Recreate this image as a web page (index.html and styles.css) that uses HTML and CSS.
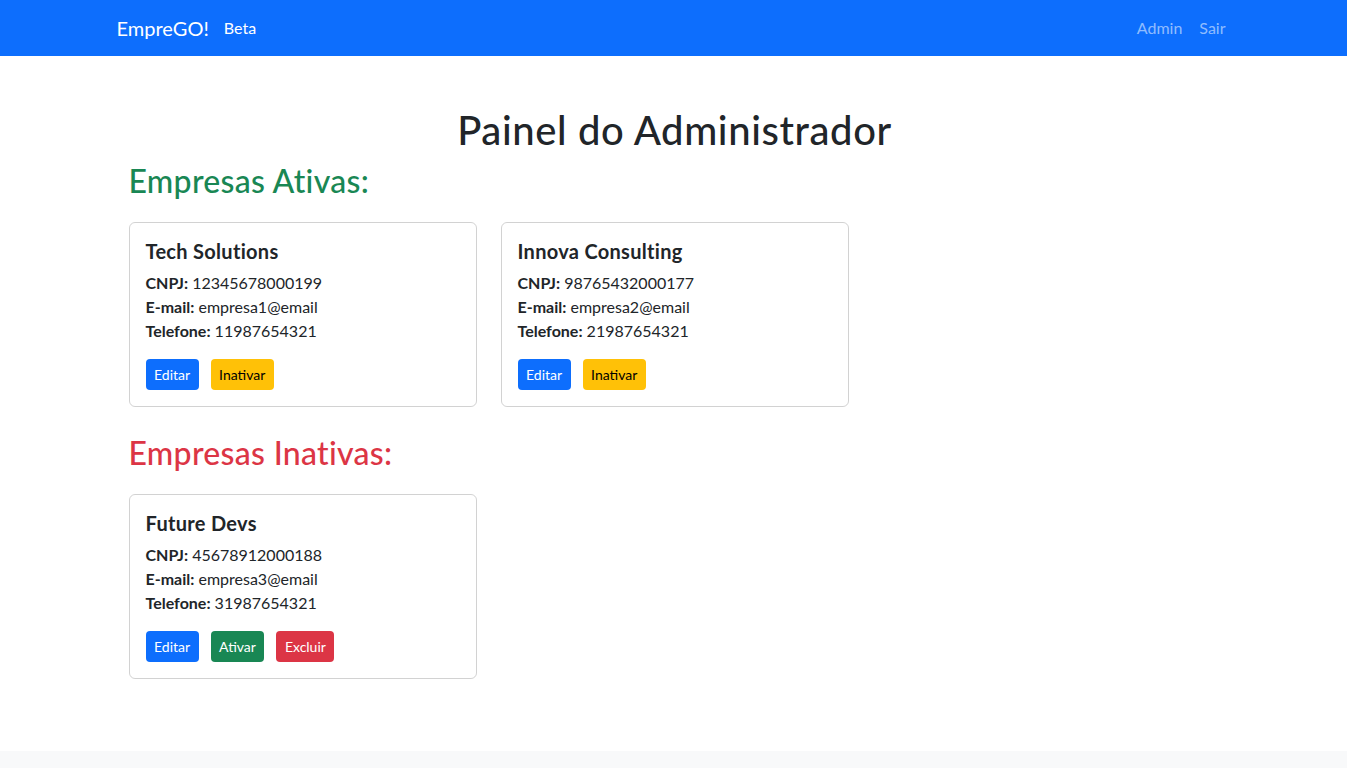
FILE: index.html
```html
<!DOCTYPE html>
<html lang="pt-BR">
<head>
<meta charset="utf-8">
<title>Painel do Administrador - EmpreGO!</title>
<link rel="stylesheet" href="styles.css">
</head>
<body>
<nav class="navbar">
  <div class="nav-inner">
    <div class="nav-left">
      <a class="brand" href="#">EmpreGO!</a>
      <a class="nav-link active" href="#">Beta</a>
    </div>
    <div class="nav-right">
      <a class="nav-link" href="#">Admin</a>
      <a class="nav-link" href="#">Sair</a>
    </div>
  </div>
</nav>

<main class="container">
  <h1 class="page-title">Painel do Administrador</h1>

  <h2 class="section-title ativas">Empresas Ativas:</h2>
  <div class="cards">
    <div class="card">
      <h5 class="card-title">Tech Solutions</h5>
      <p class="info"><b>CNPJ:</b> 12345678000199</p>
      <p class="info"><b>E-mail:</b> empresa1@email</p>
      <p class="info"><b>Telefone:</b> 11987654321</p>
      <div class="actions">
        <a class="btn btn-primary" href="#">Editar</a>
        <a class="btn btn-warning" href="#">Inativar</a>
      </div>
    </div>
    <div class="card">
      <h5 class="card-title">Innova Consulting</h5>
      <p class="info"><b>CNPJ:</b> 98765432000177</p>
      <p class="info"><b>E-mail:</b> empresa2@email</p>
      <p class="info"><b>Telefone:</b> 21987654321</p>
      <div class="actions">
        <a class="btn btn-primary" href="#">Editar</a>
        <a class="btn btn-warning" href="#">Inativar</a>
      </div>
    </div>
  </div>

  <h2 class="section-title inativas">Empresas Inativas:</h2>
  <div class="cards">
    <div class="card">
      <h5 class="card-title">Future Devs</h5>
      <p class="info"><b>CNPJ:</b> 45678912000188</p>
      <p class="info"><b>E-mail:</b> empresa3@email</p>
      <p class="info"><b>Telefone:</b> 31987654321</p>
      <div class="actions">
        <a class="btn btn-primary" href="#">Editar</a>
        <a class="btn btn-success" href="#">Ativar</a>
        <a class="btn btn-danger" href="#">Excluir</a>
      </div>
    </div>
  </div>
</main>

<footer class="footer"></footer>
</body>
</html>
```
FILE: styles.css
```css
* { box-sizing: border-box; }
html, body { margin: 0; padding: 0; }
body {
  font-family: Lato, "Noto Sans", sans-serif;
  font-size: 16px;
  line-height: 1.5;
  color: #212529;
  background: #fff;
}
a { text-decoration: none; }

.navbar {
  background: #0d6efd;
  height: 56px;
}
.nav-inner {
  width: 1116px;
  margin: 0 auto;
  height: 56px;
  display: flex;
  align-items: center;
  justify-content: space-between;
}
.nav-left, .nav-right { display: flex; align-items: center; }
.brand {
  color: #fff;
  font-size: 20px;
  line-height: 30px;
  margin-left: 1px;
  margin-right: 15px;
}
.nav-link {
  color: rgba(255,255,255,.55);
  font-size: 16px;
  line-height: 24px;
}
.nav-link.active { color: #fff; }
.nav-right .nav-link { margin-left: 17px; }
.nav-right { margin-right: 6px; }

.container {
  width: 1092px;
  margin-left: calc(50% - 545px);
  padding-top: 50px;
  padding-bottom: 72px;
}
.page-title {
  margin: 0 0 8px;
  font-size: 40px;
  font-weight: 500;
  line-height: 48px;
  letter-spacing: 0.6px;
  text-align: center;
}
.section-title {
  margin: 0 0 22px;
  font-size: 32px;
  font-weight: 500;
  line-height: 38px;
  letter-spacing: 0.3px;
}
.ativas { color: #198754; }
.inativas { color: #dc3545; margin-top: 27px; }

.cards {
  display: flex;
  gap: 24px;
}
.card {
  width: 348px;
  border: 1px solid rgba(0,0,0,.175);
  border-radius: 6px;
  padding: 16px;
}
.card-title {
  margin: 0 0 8px;
  font-size: 20px;
  font-weight: 700;
  line-height: 24px;
  letter-spacing: 0.3px;
}
.info { margin: 0; line-height: 24px; }
.info b { font-weight: 700; }
.actions {
  margin-top: 16px;
  display: flex;
  gap: 12px;
}
.btn {
  display: inline-block;
  font-size: 14px;
  line-height: 21px;
  padding: 5px 8.5px;
  border-radius: 4px;
  color: #fff;
}
.btn-primary { background: #0d6efd; }
.btn-warning { background: #ffc107; color: #000; }
.btn-success { background: #198754; }
.btn-danger { background: #dc3545; }

.footer {
  background: #f8f9fa;
  height: 40px;
}
```
